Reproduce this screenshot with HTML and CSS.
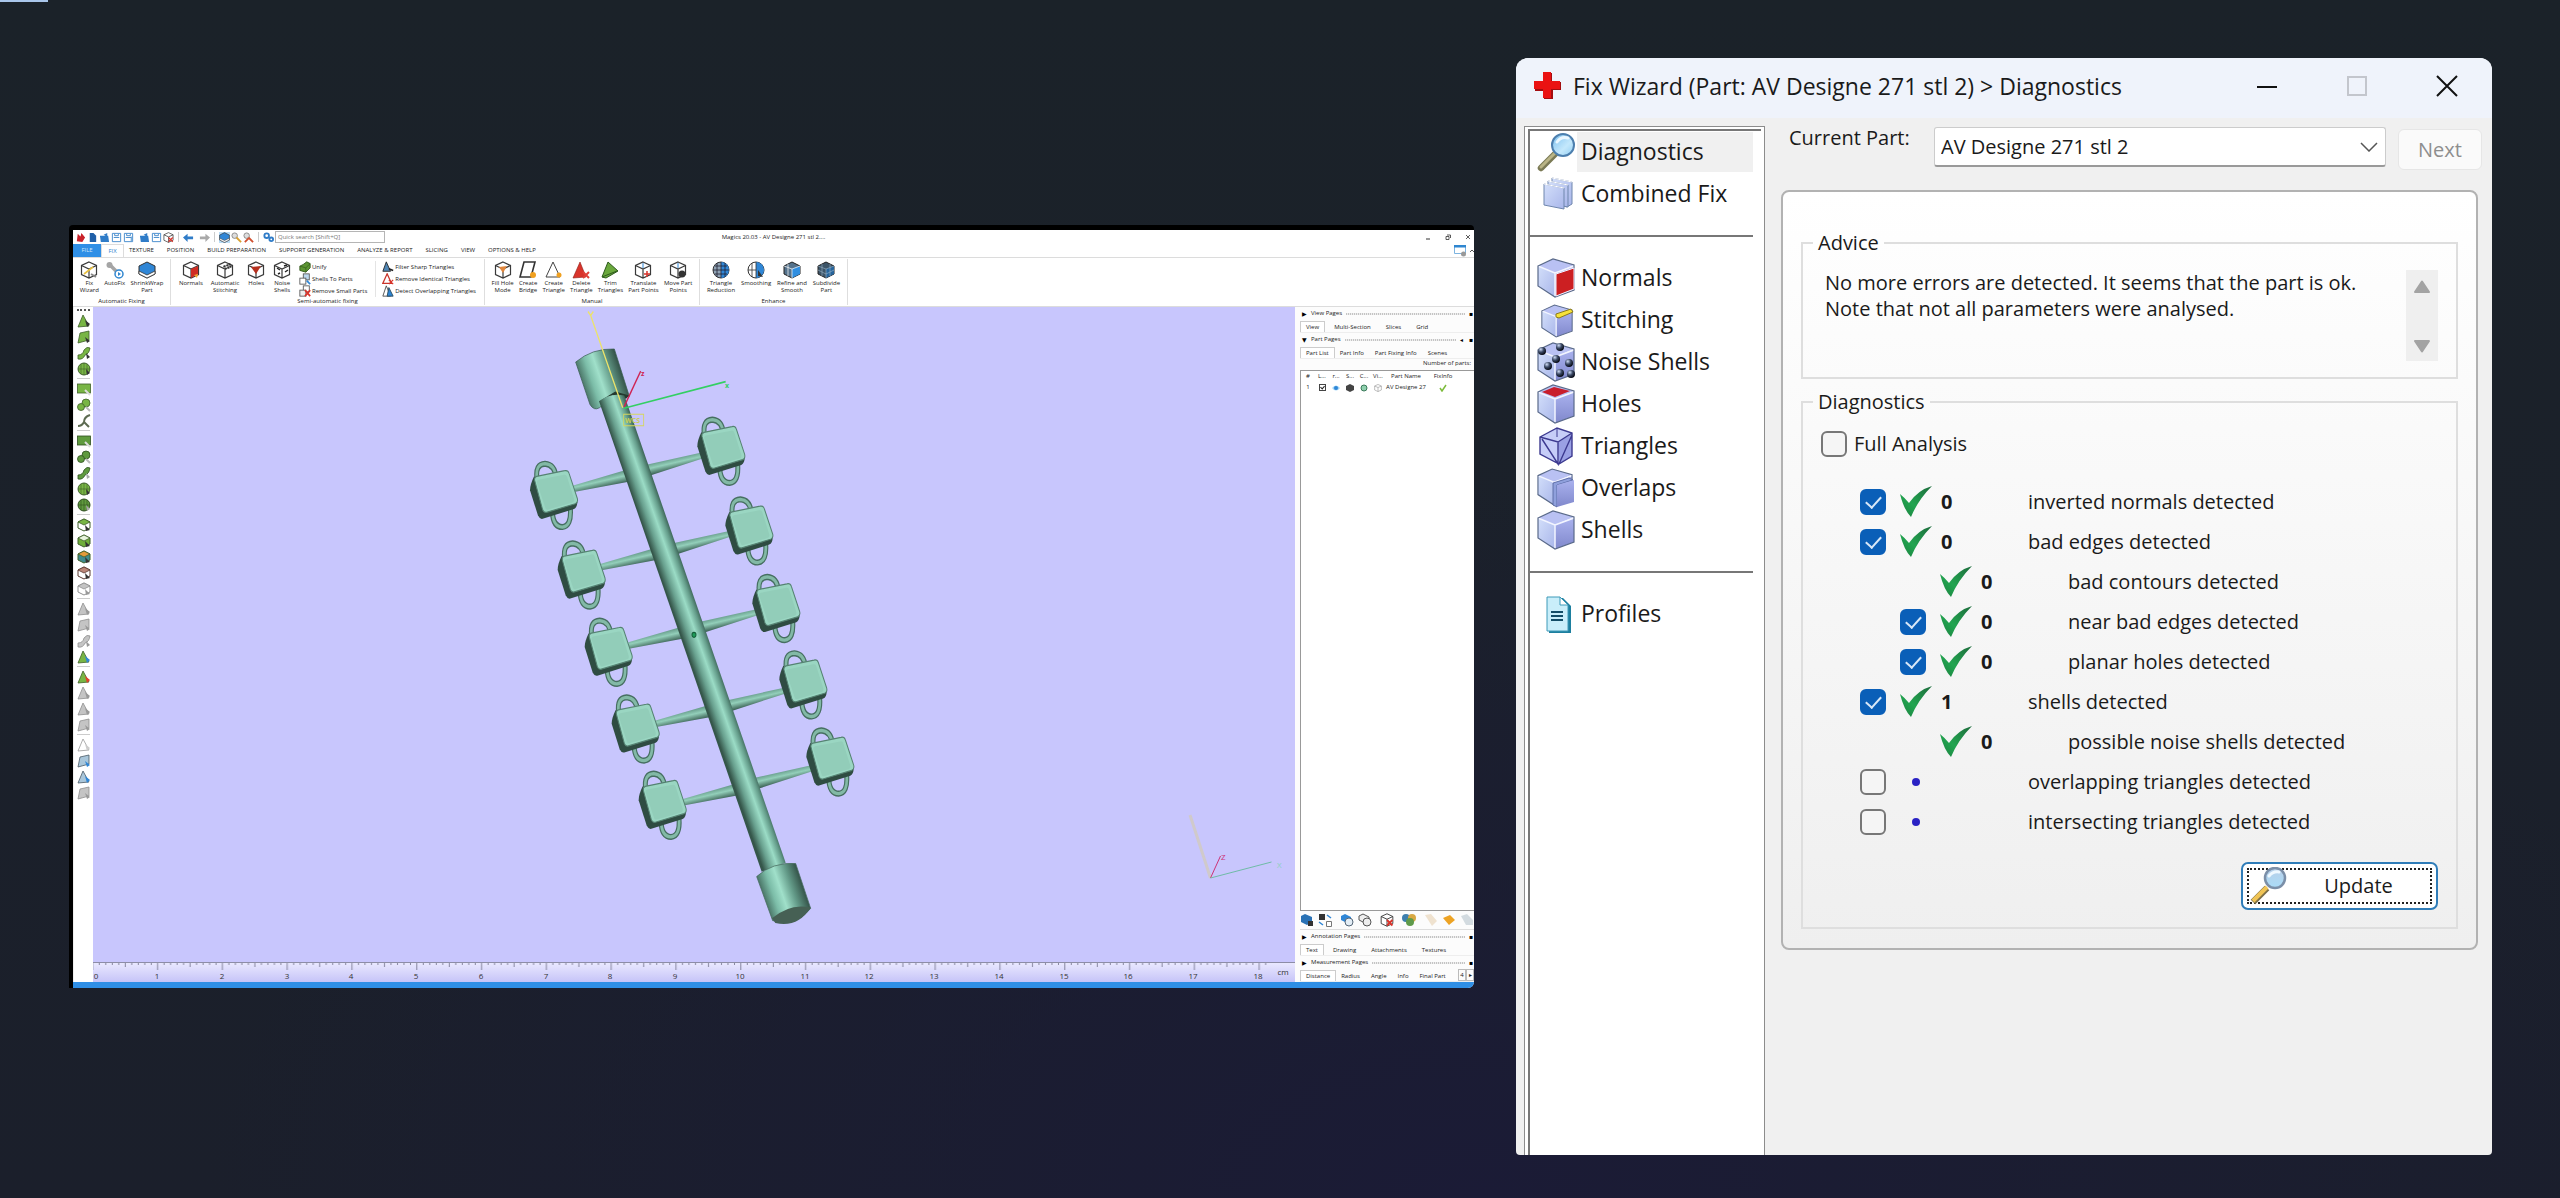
FILE: index.html
```html
<!DOCTYPE html>
<html lang="en">
<head>
<meta charset="utf-8">
<meta name="viewport" content="width=device-width, initial-scale=1">
<title>Magics - Fix Wizard</title>
<link rel="stylesheet" href="styles.css">
</head>
<body>
<svg class="defs" aria-hidden="true">
  <defs>
    <linearGradient id="lens" x1="0" y1="0" x2="1" y2="1"><stop offset="0" stop-color="#7cc0ee"/><stop offset=".6" stop-color="#c4e8fc"/><stop offset="1" stop-color="#8fcdf2"/></linearGradient>
    <linearGradient id="lens2" x1="0" y1="0" x2="0" y2="1"><stop offset="0" stop-color="#b9cfe8"/><stop offset="1" stop-color="#a9dcf8"/></linearGradient>
    <linearGradient id="face" x1="0" y1="0" x2="1" y2="1"><stop offset="0" stop-color="#d3dffa"/><stop offset="1" stop-color="#a9b6ea"/></linearGradient>
    <linearGradient id="side" x1="0" y1="0" x2="0" y2="1"><stop offset="0" stop-color="#aab2ee"/><stop offset="1" stop-color="#8088cc"/></linearGradient>
    <linearGradient id="tickfill" x1="1" y1="0" x2="0" y2="1"><stop offset="0" stop-color="#1d6b3c"/><stop offset=".6" stop-color="#22a550"/><stop offset="1" stop-color="#1a7c3e"/></linearGradient>
    <radialGradient id="ball" cx=".35" cy=".3" r=".7"><stop offset="0" stop-color="#cfdcf6"/><stop offset=".5" stop-color="#3c4a66"/><stop offset="1" stop-color="#070a14"/></radialGradient>

    <symbol id="magnifier" viewBox="0 0 38 38">
      <path d="M19 20 4 35" stroke="#7b7a55" stroke-width="6.500" stroke-linecap="round"/>
      <path d="M18 20 4 34" stroke="#b9b486" stroke-width="3" stroke-linecap="round"/>
      <circle cx="26" cy="12" r="11" fill="url(#lens)" stroke="#4d7fae" stroke-width="2"/>
      <path d="M20 9q4-6 11-4" stroke="#eaf7ff" stroke-width="3" fill="none" stroke-linecap="round"/>
    </symbol>
    <symbol id="magnifier-gold" viewBox="0 0 38 38">
      <path d="M18 21 4 35" stroke="#7d7048" stroke-width="6.500"/>
      <path d="M18 20 4 34" stroke="#f0c455" stroke-width="4"/>
      <circle cx="26" cy="11" r="10" fill="url(#lens2)" stroke="#7b8fa8" stroke-width="2.500"/>
      <path d="M20 9q4-5 10-4" stroke="#eef8ff" stroke-width="3" fill="none" stroke-linecap="round"/>
    </symbol>
    <symbol id="stack" viewBox="0 0 38 38">
      <g stroke="#6f86ad" fill="url(#face)"><path d="m15 3 20 4v22l-5 3-15-4z"/><path d="m11 6 20 4v22l-20-4z"/><path d="m7 9 20 4v21L7 30z"/></g>
      <path d="m7 9 20 4M11 6l20 4M15 3l20 4" stroke="#fff" stroke-width="1"/>
    </symbol>
    <symbol id="cube" viewBox="0 0 38 40">
      <path d="M1 8v20l17 11V15z" fill="url(#face)"/><path d="M18 15 37 8v24l-19 7z" fill="url(#side)"/><path d="M1 8 16 1l21 6-19 8z" fill="#b9c1f3"/>
      <path d="M18 39V15L1 8m17 7 19-7" stroke="#f2f5ff" stroke-width="1.500" fill="none"/>
      <path d="M1 8 16 1l21 6v25l-19 7L1 28z" fill="none" stroke="#5a6a8a" stroke-width="1.200"/>
    </symbol>
    <symbol id="cube-normals" viewBox="0 0 38 40"><use href="#cube"/><path d="M19 16 37 10v21l-18 7z" fill="#cc1f22" stroke="#f2f2ff"/></symbol>
    <symbol id="cube-stitch" viewBox="0 0 38 40"><use href="#cube" x="4" y="3" width="32" height="36"/><path d="m19 14 15-5 2 3-14 6-3-1z" fill="#f7e23a" stroke="#8a7a1d"/></symbol>
    <symbol id="cube-noise" viewBox="0 0 38 40"><use href="#cube"/><g fill="url(#ball)"><circle cx="5" cy="9" r="4"/><circle cx="23" cy="5" r="4"/><circle cx="19" cy="17" r="4"/><circle cx="32" cy="21" r="4"/><circle cx="11" cy="24" r="4"/><circle cx="23" cy="31" r="4"/><circle cx="34" cy="32" r="4"/></g></symbol>
    <symbol id="cube-holes" viewBox="0 0 38 40"><use href="#cube"/><path d="M5 8 17 3l16 4-15 6z" fill="#c81e2c"/></symbol>
    <symbol id="cube-tri" viewBox="0 0 38 40"><path d="M3 11 20 2l15 5v23L22 38 3 28z" fill="#c6cdf8"/><path d="M21 17 35 7v23L22 38z" fill="#9aa0e4"/><path d="M3 11 20 2l15 5v23L22 38 3 28zl18 5L35 7M21 16v22L5 13M35 9 22 38" fill="none" stroke="#3d3a90" stroke-width="1.400"/><path d="M20 2v9" stroke="#3d3a90"/></symbol>
    <symbol id="cube-overlap" viewBox="0 0 38 40"><use href="#cube" x="0" y="0" width="36" height="38"/><path d="M16 15v22l4 2V17l16-5-4-2z" fill="#8fa0dc" stroke="#4f5f9a" stroke-width=".8"/><path d="M20 17 37 12v22l-17 5z" fill="url(#side)"/></symbol>
    <symbol id="profile" viewBox="0 0 38 40"><path d="M11 4h15l8 8v27H12z" fill="#1d7f9f"/><path d="M10 3h13l8 8v26H10z" fill="#c9eefa" stroke="#3e9ab8"/><path d="M23 3v8h8z" fill="#fff" stroke="#3e9ab8"/><path d="M14 18h12M14 22h12M14 26h12" stroke="#124c66" stroke-width="1.800"/></symbol>
    <symbol id="tick" viewBox="0 0 32 32"><path d="M0 8q5 4 9 9Q18 4 32 0 18 14 11 31 4 24 0 8z" fill="url(#tickfill)"/></symbol>

    <symbol id="box" viewBox="0 0 18 18"><path d="M9 1 16.500 4.500v9L9 17 1.500 13.500v-9zM1.500 4.500 9 8l7.500-3.500M9 8v9" fill="#fff" stroke="#3a3a3a" stroke-width="1.200"/></symbol>
    <symbol id="r-wizard" viewBox="0 0 18 18"><use href="#box"/><path d="M4 13 13 6" stroke="#e8c040" stroke-width="1.600"/><path d="m11 13 5 3" stroke="#888" stroke-width="2"/></symbol>
    <symbol id="r-auto" viewBox="0 0 18 18"><path d="m3 3 9 9" stroke="#a5a5a5" stroke-width="3.500"/><circle cx="3.500" cy="4" r="3" fill="#a5a5a5"/><circle cx="13" cy="13" r="4" fill="#fff" stroke="#2f86d0" stroke-width="1.500"/><path d="m12 11 3 2-3 2z" fill="#2f86d0"/></symbol>
    <symbol id="r-wrap" viewBox="0 0 18 18"><path d="m9 1 8 4v8l-8 4-8-4V5z" fill="#2f86d6" stroke="#333"/><path d="m1 10 8 4 8-4v3l-8 4-8-4z" fill="#fff" stroke="#333" stroke-width=".8"/></symbol>
    <symbol id="r-normals" viewBox="0 0 18 18"><use href="#box"/><path d="m9 8 7-3v8l-7 4z" fill="#cf2c22"/><path d="m12 14 4-1-1 4z" fill="#f3a32a"/></symbol>
    <symbol id="r-stitch" viewBox="0 0 18 18"><use href="#box"/><path d="m7 6 8-3m-7 1 2 5m1-6 2 5m0-6 2 5" stroke="#333"/></symbol>
    <symbol id="r-holes" viewBox="0 0 18 18"><use href="#box"/><path d="m4 6 10-1-5 8z" fill="#b5301f"/></symbol>
    <symbol id="r-noise" viewBox="0 0 18 18"><use href="#box"/><path d="M4 7 7 9M11 5l3-1M12 11l3-2M5 13l2-1" stroke="#222" stroke-width="1.500"/></symbol>
    <symbol id="r-fill" viewBox="0 0 18 18"><use href="#box"/><path d="m5 6 8-1-4 7z" fill="#e0863c"/></symbol>
    <symbol id="r-bridge" viewBox="0 0 18 18"><path d="M5 1h11l-4 15H1z" fill="#fff" stroke="#333" stroke-width="1.600"/><circle cx="14" cy="14" r="3" fill="#f0a020"/></symbol>
    <symbol id="r-tri" viewBox="0 0 18 18"><path d="m8 1 7 15H1z" fill="#fff" stroke="#444"/><circle cx="14" cy="14" r="2.500" fill="#f0a020"/></symbol>
    <symbol id="r-del" viewBox="0 0 18 18"><path d="m8 1 6 15-13 1z" fill="#d9342b" stroke="#8d1c16" stroke-width=".6"/><path d="m11 11 6 6m0-6-6 6" stroke="#e04038" stroke-width="2"/></symbol>
    <symbol id="r-trim" viewBox="0 0 18 18"><path d="m7 1 10 9-12 7-4-1z" fill="#6aa83c" stroke="#2d5a1c"/><path d="m1 16 15-6" stroke="#2d5a1c"/></symbol>
    <symbol id="r-translate" viewBox="0 0 18 18"><use href="#box"/><path d="M9 2v5" stroke="#2f86d6"/><path d="M10 13h6m-3-3v6" stroke="#d9342b" stroke-width="1.500"/></symbol>
    <symbol id="r-move" viewBox="0 0 18 18"><use href="#box"/><path d="M9 2v5" stroke="#2f86d6"/><circle cx="13" cy="13" r="3.500" fill="#333"/></symbol>
    <symbol id="r-reduce" viewBox="0 0 18 18"><circle cx="9" cy="9" r="8" fill="#8fa2b4" stroke="#333"/><path d="M9 1a8 8 0 0 1 0 16z" fill="#2f86d6"/><path d="M1 9h16M3 5h12M3 13h12M9 1v16M5 2v14M13 2v14" stroke="#223" stroke-width=".8"/></symbol>
    <symbol id="r-smooth" viewBox="0 0 18 18"><circle cx="9" cy="9" r="8" fill="#fff" stroke="#333"/><path d="M9 1a8 8 0 0 1 0 16z" fill="#2f86d6"/><path d="M1 9h8M9 1v16M5 2v14" stroke="#333" stroke-width=".8"/><path d="m11 9 5 7-5-1z" fill="#333"/></symbol>
    <symbol id="r-refine" viewBox="0 0 18 18"><path d="m9 1 8 4v8l-8 4-8-4V5z" fill="#54728c" stroke="#222"/><path d="m9 8 8-3v8l-8 4z" fill="#2f8ee0"/><path d="m1 5 8 3 8-3M9 8v9M5 3v12" stroke="#fff" stroke-width=".7" fill="none"/></symbol>
    <symbol id="r-sub" viewBox="0 0 18 18"><path d="m9 1 8 4v8l-8 4-8-4V5z" fill="#3d5568" stroke="#222"/><path d="m9 8 8-3v8l-8 4z" fill="#27659c"/><path d="m1 9 8 4 8-4M1 5l8 3 8-3M9 8v9M5 3v12M13 3v12" stroke="#9bb4c8" stroke-width=".6" fill="none"/></symbol>
    <symbol id="s-unify" viewBox="0 0 14 14"><path d="m9 1 4 2v5l-5 5-7-2V6l4-2z" fill="#5c9433" stroke="#2f5519"/><path d="m1 6 7 2 5-5M8 8v5" stroke="#2f5519" stroke-width=".7" fill="none"/></symbol>
    <symbol id="s-shells" viewBox="0 0 14 14"><rect x="5" y="1" width="7" height="7" fill="#bcd7ef" stroke="#555"/><rect x="1" y="6" width="7" height="7" fill="#fff" stroke="#555"/><path d="m9 9 4 4" stroke="#2f86d6" stroke-width="2"/></symbol>
    <symbol id="s-small" viewBox="0 0 14 14"><rect x="5" y="1" width="7" height="7" fill="#fff" stroke="#555"/><rect x="1" y="6" width="7" height="7" fill="#eee" stroke="#555"/><path d="m7 6 6 7m0-7-6 7" stroke="#d9342b" stroke-width="2"/></symbol>
    <symbol id="s-filter" viewBox="0 0 14 14"><path d="m5 1 5 11H1z" fill="#4f86b5" stroke="#222"/><path d="m8 9 5 2" stroke="#222" stroke-width="2"/></symbol>
    <symbol id="s-ident" viewBox="0 0 14 14"><path d="m6 1 5 11H1z" fill="#fff" stroke="#c9352b" stroke-width="1.500"/><path d="m8 8 5 5m0-5-5 5" stroke="#d9342b" stroke-width="1.500"/></symbol>
    <symbol id="s-overlap" viewBox="0 0 14 14"><path d="m5 1 5 12H1z" fill="#fff" stroke="#444"/><path d="m8 3 5 10H6z" fill="#2f86d6" stroke="#245"/></symbol>

    <symbol id="t-tri" viewBox="0 0 14 14"><path d="m6 1 6 11-11 1z" fill="var(--f)" stroke="var(--s)" stroke-width=".8"/><path d="m8 6 5 4-3 3z" fill="var(--c)"/></symbol>
    <symbol id="t-quad" viewBox="0 0 14 14"><path d="m3 3 9-2v9L1 13z" fill="var(--f)" stroke="var(--s)" stroke-width=".8"/><path d="m8 7 5 4-3 2z" fill="var(--c)"/></symbol>
    <symbol id="t-patch" viewBox="0 0 14 14"><path d="M1 9q5 0 6-5 3-4 6-2-1 6-5 7-2 5-7 4z" fill="var(--f)" stroke="var(--s)" stroke-width=".8"/><path d="m9 7 4 4-3 2z" fill="var(--c)"/></symbol>
    <symbol id="t-ball" viewBox="0 0 14 14"><circle cx="7" cy="7" r="6" fill="var(--f)" stroke="var(--s)"/><path d="M4 2v10M7 1v12M10 2v10M1 7h12" stroke="var(--s)" stroke-width=".6"/><path d="m9 7 4 4-3 2z" fill="var(--c)"/></symbol>
    <symbol id="t-rect" viewBox="0 0 14 14"><rect x=".5" y="2" width="13" height="9" fill="var(--f)" stroke="var(--s)" stroke-width=".8"/><path d="m8 8 5 5" stroke="#ddd" stroke-width="2"/></symbol>
    <symbol id="t-blobs" viewBox="0 0 14 14"><circle cx="9" cy="5" r="4" fill="var(--f)" stroke="var(--s)" stroke-width=".8"/><circle cx="4" cy="9" r="3.500" fill="var(--f)" stroke="var(--s)" stroke-width=".8"/><path d="m9 9 4 4" stroke="#bbb" stroke-width="2"/></symbol>
    <symbol id="t-curve" viewBox="0 0 14 14"><path d="M13 1Q7 3 7 8q-2 4-6 4M7 8l5 5" stroke="#5d6b52" stroke-width="2" fill="none"/></symbol>
    <symbol id="t-cube" viewBox="0 0 14 14"><path d="m7 1 6 3v6l-6 3-6-3V4z" fill="var(--g,#fff)" stroke="var(--s)"/><path d="m7 1 6 3-6 3-6-3z" fill="var(--f)" stroke="var(--s)" stroke-width=".8"/><path d="m8 7 5 5-4 1z" fill="var(--c)"/></symbol>

    <linearGradient id="rod" gradientUnits="userSpaceOnUse" x1="300" y1="252" x2="370" y2="222"><stop offset="0" stop-color="#35564a"/><stop offset=".25" stop-color="#68a08e"/><stop offset=".55" stop-color="#9bdcc6"/><stop offset=".8" stop-color="#659d8b"/><stop offset="1" stop-color="#33574b"/></linearGradient>
    <linearGradient id="cap" gradientUnits="userSpaceOnUse" x1="245" y1="210" x2="365" y2="160"><stop offset="0" stop-color="#426a5d"/><stop offset=".25" stop-color="#7cbda8"/><stop offset=".45" stop-color="#a0e0ca"/><stop offset=".7" stop-color="#639a88"/><stop offset="1" stop-color="#2b463d"/></linearGradient>
    <linearGradient id="cap2" gradientUnits="userSpaceOnUse" x1="790" y1="1470" x2="910" y2="1420"><stop offset="0" stop-color="#426a5d"/><stop offset=".25" stop-color="#7cbda8"/><stop offset=".45" stop-color="#a0e0ca"/><stop offset=".7" stop-color="#639a88"/><stop offset="1" stop-color="#2b463d"/></linearGradient>
    <linearGradient id="cone-r" gradientUnits="userSpaceOnUse" x1="521" y1="384" x2="527" y2="416"><stop offset="0" stop-color="#5d9080"/><stop offset=".45" stop-color="#93cfba"/><stop offset="1" stop-color="#35594d"/></linearGradient>
    <linearGradient id="cone-l" gradientUnits="userSpaceOnUse" x1="298" y1="430" x2="304" y2="462"><stop offset="0" stop-color="#5d9080"/><stop offset=".45" stop-color="#93cfba"/><stop offset="1" stop-color="#35594d"/></linearGradient>
    <g id="tag">
      <g fill="none" stroke="#466f61" stroke-width="15"><path d="M613 330q-6-36 24-37 30 2 33 34M659 410q2 38 30 38 28-2 24-46"/></g>
      <g fill="none" stroke="#82b9a6" stroke-width="8"><path d="M613 330q-6-36 24-37 30 2 33 34M659 410q2 38 30 38 28-2 24-46"/></g>
      <path d="M604 324q-12 20-12 34l24 62q6 10 14 8l94-24q10-4 10-18z" fill="#2f4c42"/>
      <path d="M606 334q-2-8 6-10l84-14q10-2 13 6l25 62q3 10-6 13l-86 21q-8 2-12-6z" fill="#9ad6c2" stroke="#558272" stroke-width="3"/>
      <path d="M613 340q-2-6 5-8l76-12q7-1 9 5l21 54q2 7-5 9l-72 17q-7 2-9-4z" fill="#92cdb9"/>
    </g>
    <path id="arm-r" d="m436 404 172-31v15l-162 43z" fill="url(#cone-r)"/>
    <path id="arm-l" d="m220 454 160-38 6 29-164 25z" fill="url(#cone-l)"/>
    <pattern id="ticks" patternUnits="userSpaceOnUse" x="92" y="962" width="64.800" height="20"><path d="M.8 0v8M7.300 0v3M13.800 0v3M20.300 0v3M26.800 0v3M33.300 0v5M39.800 0v3M46.300 0v3M52.800 0v3M59.300 0v3" stroke="#6d6d86" stroke-width=".8"/></pattern>
    <linearGradient id="rulerbg" x1="0" y1="0" x2="0" y2="1"><stop offset="0" stop-color="#ebeaff"/><stop offset="1" stop-color="#c6c4f8"/></linearGradient>
  </defs>
</svg>
<div class="accent"></div>
<main class="desk">
  <section class="app" aria-label="Magics">
    <div class="app-frame">
      <header class="titlebar">
        <div class="quick">
          <svg viewBox="0 0 12 12"><path d="M3 2 6 5l1-4 4 5-3 5-6-1z" fill="#c9222a"/></svg>
          <svg viewBox="0 0 12 12"><path d="M3 1h4l3 3v7H3z" fill="#1f5fa8"/></svg>
          <svg viewBox="0 0 12 12"><path d="M1 4h9l1 7H2zM5 3l4-2v4z" fill="#2f7cc8"/></svg>
          <svg viewBox="0 0 12 12"><path d="M1.500 1.500h9v9h-9zM3 6h6M4 2v2h4V2" fill="none" stroke="#3f88cc"/></svg>
          <svg viewBox="0 0 12 12"><path d="M1.500 1.500h9v9h-9zM3 6h6M4 2v2h4V2M9 5v5" fill="none" stroke="#3f88cc"/></svg>
          <i class="gap"></i>
          <svg viewBox="0 0 12 12"><path d="M1 4h9l1 7H2zM5 3l4-2v4z" fill="#2f7cc8"/></svg>
          <svg viewBox="0 0 12 12"><path d="M1.500 1.500h9v9h-9zM3 6h6M4 2v2h4V2" fill="none" stroke="#3f88cc"/></svg>
          <svg viewBox="0 0 18 18"><use href="#box"/><path d="m9 9 7 7m0-7-7 7" stroke="#d9342b" stroke-width="2"/></svg>
          <i class="bar"></i>
          <svg viewBox="0 0 12 12"><path d="m0 6 5-4v3h6v3H5v3z" fill="#2f7cc8"/></svg><i class="gap"></i>
          <svg viewBox="0 0 12 12"><path d="M12 6 7 2v3H1v3h6v3z" fill="#a9a9a9"/></svg>
          <i class="bar"></i>
          <svg class="on" viewBox="0 0 18 18"><use href="#r-wrap"/></svg>
          <svg viewBox="0 0 12 12"><circle cx="4" cy="4" r="3" fill="#ddd" stroke="#888"/><path d="m6 6 5 5" stroke="#d8a030" stroke-width="2"/></svg>
          <svg viewBox="0 0 12 12"><circle cx="4" cy="4" r="3" fill="#ddd" stroke="#888"/><path d="m6 6 5 5M2 11l4-4" stroke="#d05030" stroke-width="2"/></svg>
          <i class="bar"></i>
          <svg viewBox="0 0 12 12"><circle cx="4" cy="4" r="2.500" fill="none" stroke="#2f7cc8" stroke-width="2"/><circle cx="9" cy="8" r="2" fill="none" stroke="#2f7cc8" stroke-width="2"/></svg>
          <input type="search" aria-label="Quick search" placeholder="Quick search [Shift+Q]">
        </div>
        <span class="doc-title">Magics 20.03 - AV Designe 271 stl 2....</span>
        <div class="win">
          <button type="button" aria-label="Minimize"><svg viewBox="0 0 6 6"><path d="M1 5h4" stroke="#333"/></svg></button>
          <button type="button" aria-label="Restore"><svg viewBox="0 0 6 6"><path d="M1 2.500h3v3H1zM2 1h3.500v3" stroke="#333" fill="none" stroke-width=".8"/></svg></button>
          <button type="button" aria-label="Close"><svg viewBox="0 0 6 6"><path d="m1 1 4 4m0-4L1 5" stroke="#333" stroke-width=".8"/></svg></button>
        </div>
      </header>
      <nav class="tabs">
        <a class="file" href="#file">FILE</a><a class="current" href="#fix">FIX</a>
        <div class="tab-list"><a href="#texture">TEXTURE</a><a href="#position">POSITION</a><a href="#build">BUILD PREPARATION</a><a href="#support">SUPPORT GENERATION</a><a href="#analyze">ANALYZE &amp; REPORT</a><a href="#slicing">SLICING</a><a href="#view">VIEW</a><a href="#options">OPTIONS &amp; HELP</a></div>
        <svg class="panel-ico" viewBox="0 0 20 12"><path d="M.5.500h11v8H.5z" fill="#fff" stroke="#7db4e0"/><path d="M0 0h12v2.500H0z" fill="#2f86d0"/><circle cx="9.500" cy="9" r="2.500" fill="#999"/><path d="m16 7 2-2 2 2" stroke="#555" fill="none"/></svg>
      </nav>
      <div class="ribbon">
        <div class="group g-auto">
          <div class="tools">
            <button type="button"><svg><use href="#r-wizard"/></svg>Fix<br>Wizard</button>
            <button type="button"><svg><use href="#r-auto"/></svg>AutoFix</button>
            <button type="button"><svg><use href="#r-wrap"/></svg>ShrinkWrap<br>Part</button>
          </div>
          <span class="group-name">Automatic Fixing</span>
        </div>
        <div class="group g-semi">
          <div class="tools">
            <button type="button"><svg><use href="#r-normals"/></svg>Normals</button>
            <button type="button"><svg><use href="#r-stitch"/></svg>Automatic<br>Stitching</button>
            <button type="button"><svg><use href="#r-holes"/></svg>Holes</button>
            <button type="button"><svg><use href="#r-noise"/></svg>Noise<br>Shells</button>
            <div class="stacked">
              <button type="button"><svg><use href="#s-unify"/></svg>Unify</button>
              <button type="button"><svg><use href="#s-shells"/></svg>Shells To Parts</button>
              <button type="button"><svg><use href="#s-small"/></svg>Remove Small Parts</button>
            </div>
            <div class="stacked">
              <button type="button"><svg><use href="#s-filter"/></svg>Filter Sharp Triangles</button>
              <button type="button"><svg><use href="#s-ident"/></svg>Remove Identical Triangles</button>
              <button type="button"><svg><use href="#s-overlap"/></svg>Detect Overlapping Triangles</button>
            </div>
          </div>
          <span class="group-name">Semi-automatic fixing</span>
        </div>
        <div class="group g-manual">
          <div class="tools">
            <button type="button"><svg><use href="#r-fill"/></svg>Fill Hole<br>Mode</button>
            <button type="button"><svg><use href="#r-bridge"/></svg>Create<br>Bridge</button>
            <button type="button"><svg><use href="#r-tri"/></svg>Create<br>Triangle</button>
            <button type="button"><svg><use href="#r-del"/></svg>Delete<br>Triangle</button>
            <button type="button"><svg><use href="#r-trim"/></svg>Trim<br>Triangles</button>
            <button type="button"><svg><use href="#r-translate"/></svg>Translate<br>Part Points</button>
            <button type="button"><svg><use href="#r-move"/></svg>Move Part<br>Points</button>
          </div>
          <span class="group-name">Manual</span>
        </div>
        <div class="group g-enhance">
          <div class="tools">
            <button type="button"><svg><use href="#r-reduce"/></svg>Triangle<br>Reduction</button>
            <button type="button"><svg><use href="#r-smooth"/></svg>Smoothing</button>
            <button type="button"><svg><use href="#r-refine"/></svg>Refine and<br>Smooth</button>
            <button type="button"><svg><use href="#r-sub"/></svg>Subdivide<br>Part</button>
          </div>
          <span class="group-name">Enhance</span>
        </div>
      </div>
      <div class="work">
        <aside class="toolbar">
          <i class="grip"></i>
          <svg><use href="#t-tri"/></svg><svg><use href="#t-quad"/></svg><svg><use href="#t-patch"/></svg><svg><use href="#t-ball"/></svg>
          <hr>
          <svg><use href="#t-rect"/></svg><svg><use href="#t-blobs"/></svg><svg><use href="#t-curve"/></svg>
          <hr>
          <svg class="deep"><use href="#t-rect"/></svg><svg class="deep"><use href="#t-blobs"/></svg><svg class="deep"><use href="#t-patch"/></svg><svg><use href="#t-ball"/></svg><svg class="deep"><use href="#t-ball"/></svg>
          <hr>
          <svg><use href="#t-cube"/></svg><svg class="greenbox"><use href="#t-cube"/></svg><svg class="mixbox"><use href="#t-cube"/></svg><svg class="redbox"><use href="#t-cube"/></svg><svg class="off"><use href="#t-cube"/></svg>
          <hr>
          <svg class="off"><use href="#t-tri"/></svg><svg class="off"><use href="#t-quad"/></svg><svg class="off"><use href="#t-patch"/></svg><svg class="blue"><use href="#t-tri"/></svg>
          <hr>
          <svg class="red"><use href="#t-tri"/></svg><svg class="off"><use href="#t-tri"/></svg><svg class="off"><use href="#t-tri"/></svg><svg class="off"><use href="#t-quad"/></svg>
          <hr>
          <svg class="hollow"><use href="#t-tri"/></svg><svg class="cyan"><use href="#t-quad"/></svg><svg class="cyan"><use href="#t-tri"/></svg><svg class="off"><use href="#t-quad"/></svg>
        </aside>
        <div class="view">
          <svg class="scene" viewBox="93 307 1202 655" role="img" aria-label="3D part view">
            <g transform="translate(500 300) scale(.33333 .40833)">
              <use href="#arm-r"/><use href="#arm-r" x="83" y="192"/><use href="#arm-r" x="165" y="384"/><use href="#arm-r" x="247" y="576"/><use href="#arm-r" x="329" y="766"/>
              <use href="#arm-l"/><use href="#arm-l" x="83" y="192"/><use href="#arm-l" x="165" y="384"/><use href="#arm-l" x="247" y="576"/><use href="#arm-l" x="329" y="768"/>
              <path d="M227 152q50-34 116-32l45 116q-50-2-90 28-16 8-28-8z" fill="url(#cap)" stroke="#3b5f53" stroke-width="2"/>
              <path d="m298 248 48-24 42 10-10 8-40-8z" fill="#24392f"/>
              <path d="M297 248q34-22 76-14l484 1144-72 22z" fill="url(#rod)"/>
              <path d="M770 1412q48-36 117-32l45 110q-44 46-114 30z" fill="url(#cap2)" stroke="#466b5e" stroke-width="2"/>
              <path d="M816 1514q56-38 116-26-38 50-106 38z" fill="#466054"/>
              <circle cx="582" cy="820" r="6" fill="#1d9c58" stroke="#125f38" stroke-width="3"/>
              <use href="#tag"/><use href="#tag" x="84" y="195"/><use href="#tag" x="165" y="385"/><use href="#tag" x="246" y="572"/><use href="#tag" x="327" y="761"/>
              <use href="#tag" x="-502" y="108"/><use href="#tag" x="-419" y="303"/><use href="#tag" x="-338" y="492"/><use href="#tag" x="-257" y="680"/><use href="#tag" x="-176" y="867"/>
              <g fill="none" stroke-width="4"><path d="m272 38 96 226M264 28l8 10 8-10" stroke="#ece36a"/><path d="m372 262 50-88" stroke="#cf2352"/><path d="m372 265 305-65" stroke="#33cf63"/><path d="M371 280h60v28h-60z" stroke="#d5d65c" stroke-width="2.500"/></g>
            </g>
            <text x="641" y="376" class="axis" fill="#cf2352">z</text><text x="725" y="388" class="axis" fill="#33cf63">x</text><text x="625" y="423" class="axis" fill="#c8cf58">WCS</text>
            <path d="m1190 815 20.500 63" stroke="#d0cacb" stroke-width="3"/><path d="m1210.500 878 10-22" stroke="#cc3377"/><path d="m1210.500 878 61-16" stroke="#6fbba6"/>
            <text x="1221" y="860" class="axis big" fill="#cc3377">Z</text><text x="1277" y="868" class="axis big" fill="#8ed0c0">X</text>
          </svg>
          <svg class="ruler" viewBox="93 962 1202 20" aria-hidden="true">
            <path d="M93 962h1202v20H93z" fill="url(#rulerbg)"/><path d="M93 962h1178v10H93z" fill="url(#ticks)"/><path d="M93 962.500h1202" stroke="#8d8da6"/>
            <g class="nums"><text x="96">0</text><text x="157">1</text><text x="222">2</text><text x="287">3</text><text x="351">4</text><text x="416">5</text><text x="481">6</text><text x="546">7</text><text x="610">8</text><text x="675">9</text><text x="740">10</text><text x="805">11</text><text x="869">12</text><text x="934">13</text><text x="999">14</text><text x="1064">15</text><text x="1128">16</text><text x="1193">17</text><text x="1258">18</text></g>
            <text x="1283" y="975" class="unit">cm</text>
          </svg>
        </div>
        <aside class="pages">
          <h2><b>▶</b>View Pages<i class="dots"></i><b>▪</b></h2>
          <nav class="subtabs"><a class="sel" href="#v">View</a><a href="#ms">Multi-Section</a><a href="#sl">Slices</a><a href="#gr">Grid</a></nav>
          <h2><b>▼</b>Part Pages<i class="dots"></i><b>◂</b><b>▪</b></h2>
          <nav class="subtabs tight"><a class="sel" href="#pl">Part List</a><a href="#pi">Part Info</a><a href="#pf">Part Fixing Info</a><a href="#sc">Scenes</a></nav>
          <p class="count">Number of parts:</p>
          <div class="partlist">
            <table>
              <thead><tr><th>#</th><th>L...</th><th>r...</th><th>S...</th><th>C...</th><th>Vi...</th><th class="name">Part Name</th><th class="fix">FixInfo</th></tr></thead>
              <tbody><tr><td>1</td><td><input type="checkbox" checked aria-label="Load part"></td>
              <td><svg viewBox="0 0 8 8"><path d="M0 4q4-5 8 0-4 5-8 0z" fill="#9fd4f7"/><circle cx="4" cy="4" r="2" fill="#2f86d6"/></svg></td>
              <td><svg viewBox="0 0 8 8"><path d="m4 0 4 2v4L4 8 0 6V2z" fill="#444"/></svg></td>
              <td><svg viewBox="0 0 8 8"><circle cx="4" cy="4" r="3" fill="#8fd0ae" stroke="#3b7a5a"/></svg></td>
              <td><svg viewBox="0 0 18 18" opacity=".6"><use href="#box"/></svg></td>
              <td class="name">AV Designe 27</td>
              <td><svg viewBox="0 0 8 8"><path d="m1 4 2 3 4-6" fill="none" stroke="#7cbb3a" stroke-width="1.500"/></svg></td></tr></tbody>
            </table>
          </div>
          <div class="part-tools">
            <svg viewBox="0 0 14 14"><path d="m5 1 7 3v5l-5 3-6-3V3z" fill="#2a72b5"/><path d="M8 8h5v5H8z" fill="#333"/></svg>
            <svg viewBox="0 0 14 14"><path d="M1 1h6v6H1z" fill="#333"/><path d="M8.500 8.500h5v5h-5z" fill="#fff" stroke="#777"/><path d="m9 2 4 3M1 9l4 3" stroke="#2f86d6" stroke-width="1.500"/></svg>
            <i></i>
            <svg viewBox="0 0 14 14"><path d="m5 1 6 3v4L5 9 1 7V3z" fill="#2f86d6"/><circle cx="9" cy="9" r="4" fill="#e4eef6" stroke="#567"/></svg>
            <svg viewBox="0 0 14 14"><path d="m5 1 6 3v4L5 9 1 7V3z" fill="#eee" stroke="#555"/><circle cx="9" cy="9" r="4" fill="#eee" stroke="#555"/></svg>
            <i></i>
            <svg viewBox="0 0 18 18"><use href="#box"/><path d="m9 9 7 7m0-7-7 7" stroke="#d9342b" stroke-width="2.500"/></svg>
            <i></i>
            <svg viewBox="0 0 14 14"><circle cx="4" cy="5" r="4" fill="#3d7fae"/><circle cx="10" cy="5" r="4" fill="#d8a843"/><circle cx="8" cy="9" r="4" fill="#5f9a4a"/></svg>
            <i></i>
            <svg viewBox="0 0 14 14"><path d="m1 2 6-1 6 7-5 5z" fill="#efe2cf"/></svg>
            <svg viewBox="0 0 14 14"><path d="m1 5 7-3 5 5-6 5z" fill="#eda324"/></svg>
            <svg viewBox="0 0 14 14"><path d="m1 3 6-2 6 6v5H6z" fill="#d3dbe0"/></svg>
          </div>
          <h2><b>▶</b>Annotation Pages<i class="dots"></i><b>▪</b></h2>
          <nav class="subtabs"><a class="sel" href="#tx">Text</a><a href="#dr">Drawing</a><a href="#at">Attachments</a><a href="#te">Textures</a></nav>
          <h2><b>▶</b>Measurement Pages<i class="dots"></i><b>▪</b></h2>
          <nav class="subtabs tight"><a class="sel" href="#di">Distance</a><a href="#ra">Radius</a><a href="#an">Angle</a><a href="#in">Info</a><a href="#fp">Final Part</a><span class="steps-nav"><a href="#prev">4</a><a href="#next">▸</a></span></nav>
        </aside>
      </div>
      <footer class="status"></footer>
    </div>
  </section>

  <section class="wizard" aria-label="Fix Wizard">
    <header class="wiz-title">
      <svg class="cross" viewBox="0 0 28 28"><path d="M10 1h8v9h9v8h-8v9h-9v-8H1v-8h9z" fill="#a30d10"/><path d="M9 0h8v9h9v8h-9v9H9v-9H0V9h9z" fill="#ea1212"/></svg>
      <h1>Fix Wizard (Part: AV Designe 271 stl 2) &gt; Diagnostics</h1>
      <div class="caption">
        <button type="button" aria-label="Minimize"><svg viewBox="0 0 22 22"><path d="M1 12h20" stroke="#111" stroke-width="2"/></svg></button>
        <button type="button" aria-label="Maximize" disabled><svg viewBox="0 0 22 22"><rect x="2" y="2" width="18" height="18" fill="none" stroke="#c3c6cd" stroke-width="2"/></svg></button>
        <button type="button" aria-label="Close"><svg viewBox="0 0 22 22"><path d="m1 1 20 20m0-20L1 21" stroke="#111" stroke-width="2"/></svg></button>
      </div>
    </header>
    <div class="wiz-body">
      <nav class="steps">
        <ul>
          <li><a class="active" href="#diagnostics"><svg><use href="#magnifier"/></svg><span>Diagnostics</span></a></li>
          <li><a href="#combined"><svg><use href="#stack"/></svg><span>Combined Fix</span></a></li>
          <li class="rule"></li>
          <li><a href="#normals"><svg><use href="#cube-normals"/></svg><span>Normals</span></a></li>
          <li><a href="#stitching"><svg><use href="#cube-stitch"/></svg><span>Stitching</span></a></li>
          <li><a href="#noise"><svg><use href="#cube-noise"/></svg><span>Noise Shells</span></a></li>
          <li><a href="#holes"><svg><use href="#cube-holes"/></svg><span>Holes</span></a></li>
          <li><a href="#triangles"><svg><use href="#cube-tri"/></svg><span>Triangles</span></a></li>
          <li><a href="#overlaps"><svg><use href="#cube-overlap"/></svg><span>Overlaps</span></a></li>
          <li><a href="#shells"><svg><use href="#cube"/></svg><span>Shells</span></a></li>
          <li class="rule"></li>
          <li><a href="#profiles"><svg><use href="#profile"/></svg><span>Profiles</span></a></li>
        </ul>
      </nav>
      <div class="content">
        <div class="picker">
          <label for="part">Current Part:</label>
          <div class="select"><select id="part"><option>AV Designe 271 stl 2</option></select><svg viewBox="0 0 18 10"><path d="m1 1 8 8 8-8" fill="none" stroke="#555" stroke-width="1.500"/></svg></div>
          <button type="button" class="next" disabled>Next</button>
        </div>
        <div class="card">
          <fieldset class="advice">
            <legend>Advice</legend>
            <p>No more errors are detected. It seems that the part is ok.<br>Note that not all parameters were analysed.</p>
            <div class="scroll"><svg viewBox="0 0 18 14"><path d="M9 1.500 16 12H2z" fill="#a3a3a3" stroke="#a3a3a3" stroke-width="2" stroke-linejoin="round"/></svg><svg viewBox="0 0 18 14"><path d="M9 12.500 16 2H2z" fill="#a3a3a3" stroke="#a3a3a3" stroke-width="2" stroke-linejoin="round"/></svg></div>
          </fieldset>
          <fieldset class="diag">
            <legend>Diagnostics</legend>
            <label class="full"><input type="checkbox">Full Analysis</label>
            <div class="checks">
              <label class="check"><input type="checkbox" checked><svg><use href="#tick"/></svg><b>0</b><span>inverted normals detected</span></label>
              <label class="check"><input type="checkbox" checked><svg><use href="#tick"/></svg><b>0</b><span>bad edges detected</span></label>
              <div class="check sub"><i></i><svg><use href="#tick"/></svg><b>0</b><span>bad contours detected</span></div>
              <label class="check sub"><input type="checkbox" checked><svg><use href="#tick"/></svg><b>0</b><span>near bad edges detected</span></label>
              <label class="check sub"><input type="checkbox" checked><svg><use href="#tick"/></svg><b>0</b><span>planar holes detected</span></label>
              <label class="check"><input type="checkbox" checked><svg><use href="#tick"/></svg><b>1</b><span>shells detected</span></label>
              <div class="check sub"><i></i><svg><use href="#tick"/></svg><b>0</b><span>possible noise shells detected</span></div>
              <label class="check"><input type="checkbox"><i class="dot"></i><b></b><span>overlapping triangles detected</span></label>
              <label class="check"><input type="checkbox"><i class="dot"></i><b></b><span>intersecting triangles detected</span></label>
            </div>
            <button type="button" class="update"><span class="focus"><svg><use href="#magnifier-gold"/></svg><span>Update</span></span></button>
          </fieldset>
        </div>
      </div>
    </div>
  </section>
</main>
</body>
</html>
```
FILE: styles.css
```css
* { box-sizing: border-box; }
body {
  margin: 0;
  font-family: "Open Sans", "Noto Sans", sans-serif;
  color: #1a1a1a;
  background: radial-gradient(ellipse 50% 60% at 58% 100%, #1b1b36, transparent), linear-gradient(#1b2229, #1b1f2b);
}
button, input, select { font: inherit; color: inherit; }
a { color: inherit; text-decoration: none; }
svg { display: block; flex: none; }
.defs { position: absolute; width: 0; height: 0; }
.accent { position: absolute; top: 0; left: 0; width: 48px; height: 2px; background: #a9c6ea; }

.desk {
  min-height: 100vh;
  display: grid;
  grid-template-columns: minmax(0, 1405fr) minmax(0, 976fr);
  gap: 42px;
  align-items: center;
  padding: 58px 68px 43px 69px;
}

/* Main application window */
.app { background: #000; padding: 5px 0 0 4px; border-radius: 4px 4px 6px 0; overflow: hidden; font-size: 6px; line-height: 7px; color: #222; }
.app-frame { background: #fff; }
.app button { border: 0; background: none; padding: 0; }
.titlebar { display: grid; grid-template-columns: 1fr auto 1fr; align-items: center; height: 14px; }
.quick { display: flex; align-items: center; gap: 1px; padding-left: 2px; }
.quick svg { width: 11px; height: 11px; }
.quick .on { background: #b8dcf6; }
.quick .gap { width: 3px; }
.quick .bar { width: 1px; height: 10px; margin: 0 3px; background: #ccc; }
.quick input { width: 110px; height: 12px; border: 1px solid #b5b5b5; padding: 0 2px; background: #fff; appearance: none; }
.quick input::placeholder { color: #777; opacity: 1; }
.win { display: flex; justify-content: flex-end; gap: 14px; padding-right: 3px; }
.win svg { width: 6px; height: 6px; }
.tabs { display: flex; align-items: center; height: 14px; border-bottom: 1px solid #dcdcdc; color: #222; }
.tabs .file { width: 28px; line-height: 13px; text-align: center; background: #2f8fe6; color: #cfe6fb; }
.tabs .current { width: 23px; line-height: 13px; text-align: center; border: 1px solid #dcdcdc; border-bottom: 0; color: #2f86d0; }
.tab-list { flex: 1; display: flex; gap: 13px; padding-left: 5px; white-space: nowrap; }
.panel-ico { width: 20px; height: 12px; }
.ribbon { display: flex; height: 49px; border-bottom: 1px solid #dcdcdc; }
.group { display: flex; flex-direction: column; justify-content: space-between; align-items: center; margin: 1px 0; border-right: 1px solid #dedede; }
.g-auto { width: 98px; }
.g-semi { width: 314px; }
.g-manual { width: 215px; }
.g-enhance { width: 148px; }
.tools { display: flex; justify-content: space-around; width: 100%; padding: 2px 4px 0; white-space: nowrap; }
.tools > button { display: flex; flex-direction: column; align-items: center; text-align: center; }
.tools > button svg { width: 18px; height: 18px; margin-bottom: 1px; }
.stacked { display: flex; flex-direction: column; }
.stacked + .stacked { border-left: 1px solid #e4e4e4; padding-left: 6px; }
.stacked button { display: flex; align-items: center; gap: 1px; height: 12px; }
.stacked svg { width: 12px; height: 12px; }
.group-name { line-height: 8px; }
.work { display: flex; }
.toolbar { --f: #78b544; --s: #3f5f2a; --c: #333; width: 20px; padding: 2px 3px 0; border-left: 1px solid #eee; }
.toolbar svg { width: 14px; height: 14px; margin-bottom: 2px; }
.toolbar hr { height: 1px; margin: 1px 0 3px; border: 0; background: #ccc; }
.toolbar .grip { display: block; margin-bottom: 3px; border-top: 2px dotted #555; }
.toolbar .deep { --f: #5f9a3e; --s: #2f4f20; --c: #aaa; }
.toolbar .greenbox { --g: #6fae3a; --f: #e8f4dd; }
.toolbar .mixbox { --g: #3f8a8c; --f: #e39a3a; }
.toolbar .redbox { --g: #fff; --f: #b98577; --s: #5a3a32; }
.toolbar .off { --f: #c4c4c4; --s: #8f8f8f; --c: #999; }
.toolbar .blue { --c: #2f86d6; }
.toolbar .red { --c: #e0402c; }
.toolbar .hollow { --f: #fff; --s: #999; --c: #ccc; }
.toolbar .cyan { --f: #a9c6da; --s: #4b5a66; --c: #2f86d6; }
.view { flex: 1; min-width: 0; background: #c8c6fd; }
.scene, .ruler { width: 100%; height: auto; }
.axis { font-size: 7px; font-weight: 700; }
.axis.big { font-size: 8px; font-weight: 400; }
.nums { font-size: 8px; text-anchor: middle; fill: #333; transform: translateY(979px); }
.unit { font-size: 8px; text-anchor: middle; fill: #333; }
.status { height: 6px; background: #2f8fe6; }

/* Side pages */
.pages { width: 179px; display: flex; flex-direction: column; overflow: hidden; padding: 0 0 0 5px; white-space: nowrap; background: #fcfcfc; color: #222; }
.pages h2 { display: flex; align-items: center; gap: 4px; height: 13px; margin: 0; padding-left: 2px; font-size: 6px; font-weight: 400; }
.pages h2 b { width: 5px; font-size: 6px; color: #000; font-family: "DejaVu Sans", sans-serif; }
.dots { flex: 1; height: 2px; background: repeating-linear-gradient(90deg, #c4c4c4 0 1px, #eee 1px 2px); }
.subtabs { display: flex; gap: 15px; align-items: flex-end; height: 13px; line-height: 10px; border-bottom: 1px solid #eee; }
.subtabs.tight { gap: 11px; }
.subtabs .sel { border: 1px solid #ccc; border-bottom: 0; padding: 0 5px; margin-right: -6px; background: #fff; }
.steps-nav { display: flex; margin-left: auto; }
.steps-nav a { width: 8px; border: 1px solid #bbb; text-align: center; }
.count { margin: 0; line-height: 8px; text-align: right; padding-right: 3px; }
.partlist { flex: 1; margin-top: 3px; border: 1px solid #999; border-right: 0; background: #fff; }
.partlist table { width: 158px; border-collapse: collapse; table-layout: fixed; }
.partlist th, .partlist td { height: 11px; padding: 0; font-weight: 400; text-align: center; }
.partlist .name { width: 42px; }
.partlist .fix { width: 32px; }
.partlist svg { width: 8px; height: 8px; margin: auto; }
.partlist input { appearance: none; display: block; width: 7px; height: 7px; margin: auto; border: 1px solid #444; }
.partlist input:checked::before { content: ""; display: block; width: 2px; height: 3px; margin: 0 auto; border: solid #222; border-width: 0 1px 1px 0; transform: rotate(42deg); }
.part-tools { display: flex; align-items: center; gap: 4px; height: 19px; border-bottom: 1px solid #ddd; }
.part-tools svg { width: 14px; height: 14px; }
.part-tools i { width: 1px; height: 13px; background: #d3ba94; }

/* Wizard window */
.wizard { align-self: stretch; display: flex; flex-direction: column; overflow: hidden; border-radius: 12px 12px 4px 4px; background: #f0f0f0; font-size: 20px; line-height: 26px; }
.wiz-title { display: flex; align-items: center; height: 60px; padding: 0 34px 4px 18px; background: #eff3fb; }
.cross { width: 28px; height: 28px; margin-right: 11px; }
.wiz-title h1 { flex: 1; margin: 0; font-size: 23px; font-weight: 400; white-space: nowrap; }
.caption { display: flex; gap: 68px; }
.caption button { border: 0; padding: 0; background: none; }
.caption svg { width: 22px; height: 22px; }
.wiz-body { flex: 1; display: flex; gap: 16px; padding: 8px 14px 0 8px; }
.steps { flex: none; width: 241px; padding: 2px 3px 0; border: 1px solid #8c8c8c; border-bottom: 0; background: #fff; }
.steps ul { height: 100%; margin: 0; padding: 0 8px 0 0; list-style: none; border: solid #777; border-width: 2px 0 0 2px; }
.steps li { height: 42px; }
.steps .rule { display: flex; align-items: center; }
.steps .rule::before { content: ""; flex: 1; height: 2px; background: #777; }
.steps a { display: flex; height: 42px; align-items: center; padding-left: 7px; font-size: 23px; gap: 2px; }
.steps a svg { width: 38px; height: 40px; }
.steps a span { flex: 1; padding-left: 4px; line-height: 38px; padding-bottom: 2px; white-space: nowrap; }
.steps .active span { background: #f0f0f0; }
.content { flex: 1; min-width: 0; }
.picker { display: flex; align-items: flex-start; height: 64px; padding: 1px 0 0 8px; margin-right: -4px; }
.picker label { width: 145px; line-height: 22px; }
.select { flex: 1; display: flex; align-items: center; position: relative; }
.select select { width: 100%; height: 40px; padding: 0 6px; border: 1px solid #ccc; border-bottom: 2px solid #999; border-radius: 3px; background: #fff; appearance: none; }
.select svg { position: absolute; right: 8px; width: 18px; height: 10px; }
.next { width: 84px; height: 41px; margin: 2px 0 0 12px; border: 1px solid #e6e6e6; border-radius: 6px; background: #fafafa; }
.next:disabled { color: #8e8e8e; }
.card { display: flex; flex-direction: column; gap: 10px; padding: 38px 18px 19px; border: 2px solid #b2b2b2; border-radius: 8px; background: linear-gradient(#fff, #efefef); }
fieldset { min-width: 0; margin: 0; padding: 0; border: 2px solid #dedede; }
legend { margin-left: 10px; padding: 0 5px; }
.advice { height: 149px; }
.advice p { float: left; margin: 14px 0 0 22px; }
.scroll { float: right; display: flex; flex-direction: column; justify-content: space-between; align-items: center; width: 32px; height: 91px; margin: 14px 18px 0 0; padding: 10px 0 8px; background: #efefef; }
.scroll svg { width: 18px; height: 14px; }
.full { display: flex; align-items: center; gap: 7px; margin: 16px 0 0 18px; }
.diag input { appearance: none; display: grid; place-items: center; flex: none; width: 26px; height: 26px; margin: 0; border: 2px solid #777; border-radius: 6px; background: #f5f5f5; }
.diag input:checked { border-color: #0a5fb8; background: #0a5fb8; }
.diag input:checked::before { content: ""; width: 7px; height: 13px; margin-top: -4px; border: solid #d8e8f8; border-width: 0 2px 2px 0; transform: rotate(42deg); }
.checks { padding: 25px 0 0 57px; }
.check { display: grid; grid-template-columns: 26px 32px 79px 1fr; column-gap: 14px; align-items: center; height: 40px; }
.check b { margin-left: -5px; }
.check svg { width: 32px; height: 32px; }
.check span { margin-left: -11px; }
.check.sub { padding-left: 40px; }
.dot { justify-self: center; width: 8px; height: 8px; border-radius: 50%; background: #2a22c4; }
.update { display: block; width: 197px; height: 48px; margin: 20px 18px 17px auto; padding: 4px; border: 2px solid #2f7cb8; border-radius: 7px; background: #fff; }
.focus { display: flex; align-items: center; height: 36px; border: 2px dotted #222; }
.focus svg { width: 38px; height: 38px; }
.focus span { flex: 1; }
```
